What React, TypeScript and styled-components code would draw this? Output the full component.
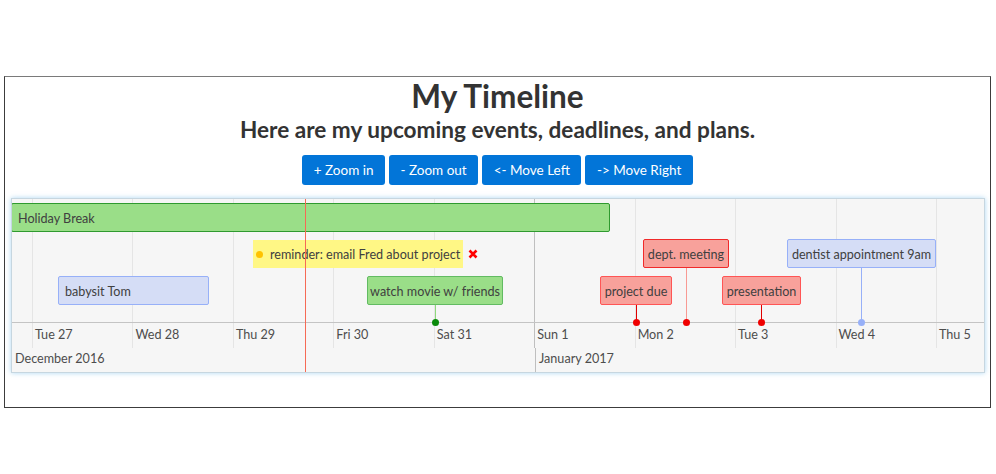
import * as React from "react";
import styled, { createGlobalStyle } from "styled-components";

const DAY = 100.45;
const LEAD = 21;
const AXIS_TOP = 123;

// x position (inside the timeline) of a date, counted in days from Tue Dec 27
const dayX = (d: number) => LEAD + d * DAY;

const GlobalStyle = createGlobalStyle`
  body {
    margin: 0;
    background: #ffffff;
    font-family: Lato, "Open Sans", sans-serif;
  }
`;

const Page = styled.div`
  padding: 76px 5px 0 4px;
`;

const Frame = styled.div`
  border: 1px solid #3c3c3c;
  border-top-color: #7a7a7a;
  height: 330px;
  display: flex;
  flex-direction: column;
`;

const Title = styled.h1`
  margin: 0;
  font-size: 31.5px;
  line-height: 38px;
  font-weight: 700;
  color: #333333;
  text-align: center;
`;

const Subtitle = styled.h3`
  margin: 0;
  font-size: 22.6px;
  line-height: 30px;
  font-weight: 700;
  color: #333333;
  text-align: center;
`;

const Toolbar = styled.div`
  display: flex;
  justify-content: center;
  gap: 4px;
  margin-top: 10px;
`;

const Button = styled.button`
  height: 30px;
  padding: 0 11.5px;
  border: none;
  border-radius: 3px;
  background: #0275d8;
  color: #ffffff;
  font-family: Lato, "Open Sans", sans-serif;
  font-size: 13.5px;
  cursor: pointer;
`;

const Timeline = styled.div`
  position: relative;
  margin: 13px 5px 0 6px;
  border: 1px solid #c6d6e0;
  background: #f6f6f6;
  box-shadow: 0 0 5px rgba(120, 190, 235, 0.6);
  overflow: hidden;
  font-size: 12.6px;
  color: #4d4d4d;
`;

const DayGrid = styled.div`
  display: grid;
  grid-template-columns: ${LEAD}px repeat(10, ${DAY}px);
`;

const DayColumn = styled.div<{ $major?: boolean; $lead?: boolean }>`
  display: flex;
  flex-direction: column;
  border-left: ${(p) => (p.$lead ? "none" : `1px solid ${p.$major ? "#bfbfbf" : "#e5e5e5"}`)};
  margin-left: ${(p) => (p.$lead ? 0 : -1)}px;
`;

const ItemsCell = styled.div`
  height: ${AXIS_TOP}px;
`;

const MinorCell = styled.div`
  height: 26px;
  box-sizing: border-box;
  border-top: 1px solid #c4c4c4;
  margin-left: -1px;
  padding: 3px 0 0 3px;
  line-height: 18px;
  white-space: nowrap;
`;

const MonthRow = styled.div`
  display: flex;
  height: 24px;
`;

const MonthCell = styled.div<{ $width?: number; $major?: boolean }>`
  width: ${(p) => (p.$width ? `${p.$width}px` : "auto")};
  flex: ${(p) => (p.$width ? "none" : 1)};
  box-sizing: border-box;
  border-left: ${(p) => (p.$major ? "1px solid #bfbfbf" : "none")};
  padding: 2px 0 0 3px;
  line-height: 18px;
  white-space: nowrap;
`;

const Overlay = styled.div`
  position: absolute;
  inset: 0;
`;

const NowLine = styled.div<{ $x: number }>`
  position: absolute;
  left: ${(p) => p.$x}px;
  top: 0;
  bottom: 0;
  width: 1px;
  background: #f66a55;
  z-index: 3;
`;

type Tone = "green" | "red" | "blue";

const tones: Record<Tone, { bg: string; border: string }> = {
  green: { bg: "#9ade88", border: "#2f9a2f" },
  red: { bg: "#f8a19b", border: "#f02a2a" },
  blue: { bg: "#d5ddf6", border: "#97b0f8" },
};

const Box = styled.div<{ $tone: Tone; $border?: string }>`
  height: 29px;
  box-sizing: border-box;
  padding: 1px 6px 0;
  display: flex;
  align-items: center;
  background: ${(p) => tones[p.$tone].bg};
  border: 1px solid ${(p) => p.$border ?? tones[p.$tone].border};
  border-radius: 2px;
  color: #404040;
  white-space: nowrap;
`;

const RangeItem = styled(Box)<{ $left: number; $width: number; $top: number }>`
  position: absolute;
  left: ${(p) => p.$left}px;
  top: ${(p) => p.$top}px;
  width: ${(p) => p.$width}px;
  z-index: 2;
`;

const BoxGroup = styled.div<{ $left: number; $width: number; $top: number }>`
  position: absolute;
  left: ${(p) => p.$left}px;
  top: ${(p) => p.$top}px;
  width: ${(p) => p.$width}px;
  height: ${(p) => AXIS_TOP + 4 - p.$top}px;
  display: flex;
  flex-direction: column;
  align-items: center;
  z-index: 2;
`;

const GroupBox = styled(Box)`
  align-self: stretch;
  justify-content: center;
`;

const Stem = styled.div<{ $color: string }>`
  flex: 1;
  width: 1px;
  background: ${(p) => p.$color};
`;

const Dot = styled.div<{ $color: string }>`
  flex: none;
  width: 7px;
  height: 7px;
  margin-top: -3px;
  border-radius: 50%;
  background: ${(p) => p.$color};
`;

const PointRow = styled.div<{ $left: number; $top: number }>`
  position: absolute;
  left: ${(p) => p.$left}px;
  top: ${(p) => p.$top}px;
  display: flex;
  align-items: center;
  gap: 5px;
  z-index: 2;
`;

const PointItem = styled.div`
  width: 210px;
  height: 28px;
  box-sizing: border-box;
  padding: 1px 0 0 3px;
  display: flex;
  align-items: center;
  gap: 7px;
  background: #fff785;
  color: #404040;
  white-space: nowrap;
`;

const PointDot = styled.span`
  flex: none;
  width: 7px;
  height: 7px;
  border-radius: 50%;
  background: #ffc200;
`;

const DeleteIcon = () => (
  <svg width="10" height="10" viewBox="0 0 10 10">
    <path d="M1.5 1.5 L8.5 8.5 M8.5 1.5 L1.5 8.5" stroke="#f00" strokeWidth="2.6" />
  </svg>
);

const days = ["Tue 27", "Wed 28", "Thu 29", "Fri 30", "Sat 31", "Sun 1", "Mon 2", "Tue 3", "Wed 4", "Thu 5"];

const boxes: { text: string; d: number; width: number; row: number; tone: Tone; border?: string; stem: string; dot: string }[] = [
  { text: "watch movie w/ friends", d: 4, width: 136, row: 1, tone: "green", border: "#62bb62", stem: "#8fd87c", dot: "#0a8a0a" },
  { text: "project due", d: 6, width: 72, row: 1, tone: "red", border: "#f55", stem: "#e00000", dot: "#f00000" },
  { text: "dept. meeting", d: 6.5, width: 86, row: 0, tone: "red", stem: "#f89a93", dot: "#f00000" },
  { text: "presentation", d: 7.255, width: 79, row: 1, tone: "red", border: "#f55", stem: "#e00000", dot: "#f00000" },
  { text: "dentist appointment 9am", d: 8.25, width: 149, row: 0, tone: "blue", stem: "#97b0f8", dot: "#97b0f8" },
];

const rowTop = [40, 77];

export default function App() {
  return (
    <>
      <GlobalStyle />
      <Page>
        <Frame>
          <Title>My Timeline</Title>
          <Subtitle>Here are my upcoming events, deadlines, and plans.</Subtitle>
          <Toolbar>
            <Button>+ Zoom in</Button>
            <Button>- Zoom out</Button>
            <Button>&lt;- Move Left</Button>
            <Button>-&gt; Move Right</Button>
          </Toolbar>
          <Timeline>
            <DayGrid>
              <DayColumn $lead>
                <ItemsCell />
                <MinorCell />
              </DayColumn>
              {days.map((label, i) => (
                <DayColumn key={label} $major={i === 5}>
                  <ItemsCell />
                  <MinorCell>{label}</MinorCell>
                </DayColumn>
              ))}
            </DayGrid>
            <MonthRow>
              <MonthCell $width={Math.round(dayX(5))}>December 2016</MonthCell>
              <MonthCell $major>January 2017</MonthCell>
            </MonthRow>

            <Overlay>
              <NowLine $x={Math.round(dayX(2.708))} />
              <RangeItem $left={-1} $width={Math.round(dayX(5.745)) + 1} $top={4} $tone="green">
                Holiday Break
              </RangeItem>
              <RangeItem $left={Math.round(dayX(0.25))} $width={151} $top={77} $tone="blue">
                babysit Tom
              </RangeItem>

              <PointRow $left={241} $top={41}>
                <PointItem>
                  <PointDot />
                  reminder: email Fred about project
                </PointItem>
                <DeleteIcon />
              </PointRow>

              {boxes.map((b) => {
                const cx = Math.round(dayX(b.d));
                const top = rowTop[b.row];
                return (
                  <BoxGroup key={b.text} $left={cx - Math.round(b.width / 2)} $width={b.width} $top={top}>
                    <GroupBox $tone={b.tone} $border={b.border}>{b.text}</GroupBox>
                    <Stem $color={b.stem} />
                    <Dot $color={b.dot} />
                  </BoxGroup>
                );
              })}
            </Overlay>
          </Timeline>
        </Frame>
      </Page>
    </>
  );
}
